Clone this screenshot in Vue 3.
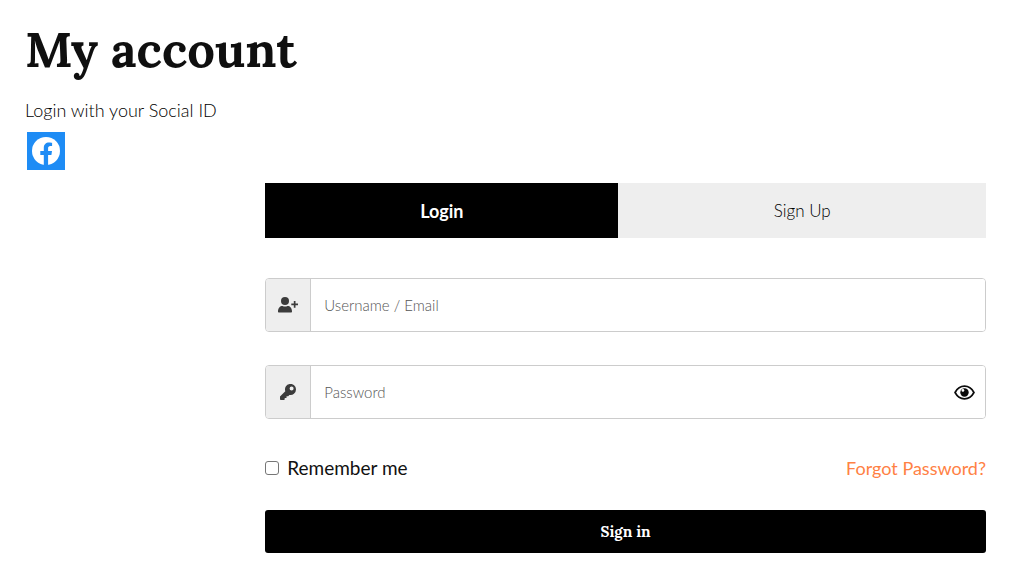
<script setup>
import { ref } from 'vue'

const username = ref('')
const password = ref('')
const remember = ref(false)
const showPassword = ref(false)
</script>

<template>
  <main class="account">
    <h1 class="title">My account</h1>
    <p class="social-text">Login with your Social ID</p>
    <a class="facebook" href="#facebook" aria-label="Login with Facebook">
      <svg viewBox="0 0 28 28" aria-hidden="true">
        <circle cx="14" cy="14" r="14" fill="#fff" />
        <path
          fill="#1e8cf5"
          d="M11.8 28V18H8.3v-4h3.5v-3.1c0-3.6 2.1-5.5 5.3-5.5 1.5 0 3 .3 3 .3v3.4h-1.7c-1.7 0-2.3 1-2.3 2.1V14h3.9l-.6 4h-3.3v10z"
        />
      </svg>
    </a>

    <section class="panel">
      <div class="tabs">
        <button type="button" class="tab tab-active">Login</button>
        <button type="button" class="tab">Sign Up</button>
      </div>

      <form class="form" @submit.prevent>
        <div class="field">
          <label class="addon" for="username" aria-label="Username or email">
            <svg class="user-icon" viewBox="0 0 20 16" aria-hidden="true">
              <circle cx="7" cy="4" r="4" />
              <path d="M0 14.500C0 11 2 9 4.500 9c.8.4 1.600.6 2.500.6S8.700 9.400 9.500 9c2.500 0 4.500 2 4.500 5.500 0 .8-.4 1-1 1H1c-.6 0-1-.2-1-1z" />
              <path d="M15.800 4h1.700v2.500H20v1.700h-2.500v2.500h-1.700V8.200h-2.500V6.500h2.500z" />
            </svg>
          </label>
          <input id="username" v-model="username" class="input" type="text" placeholder="Username / Email" />
        </div>

        <div class="field">
          <label class="addon" for="password" aria-label="Password">
            <svg class="key-icon" viewBox="0 0 16 16" aria-hidden="true">
              <path
                fill-rule="evenodd"
                d="M16 5.500a5.500 5.500 0 0 1-6.600 5.400L8.200 12.200H6.500V14H4.700v1.300c0 .4-.3.7-.7.7H.8c-.4 0-.8-.3-.8-.8v-2.700l5.300-5.300A5.500 5.500 0 1 1 16 5.500zM11.600 2.500a2 2 0 1 0 0 4 2 2 0 0 0 0-4z"
              />
            </svg>
          </label>
          <input
            id="password"
            v-model="password"
            class="input"
            :type="showPassword ? 'text' : 'password'"
            placeholder="Password"
          />
          <button type="button" class="eye" aria-label="Show password" @click="showPassword = !showPassword">
            <svg viewBox="0 0 20 14" aria-hidden="true">
              <path d="M1 7C3 3.300 6.200 1 10 1s7 2.300 9 6c-2 3.700-5.200 6-9 6S3 10.700 1 7z" fill="#fff" stroke="#0b0b0b" stroke-width="1.600" />
              <circle cx="10" cy="7" r="4" fill="#0b0b0b" />
              <circle cx="8.500" cy="5" r="1.300" fill="#fff" />
            </svg>
          </button>
        </div>

        <div class="options">
          <label class="remember" for="remember">
            <input id="remember" v-model="remember" class="checkbox" type="checkbox" />
            Remember me
          </label>
          <a class="forgot" href="#forgot">Forgot Password?</a>
        </div>

        <button type="submit" class="submit">Sign in</button>
      </form>
    </section>
  </main>
</template>

<style>
body {
  margin: 0;
  background: #fff;
}
</style>

<style scoped>
.account {
  box-sizing: border-box;
  padding: 15px 38px 32px 25px;
  color: #111;
  font-family: Lato, "Liberation Sans", sans-serif;
  font-weight: 300;
}

.title {
  margin: 0;
  color: #0f0f0f;
  font-family: Lora, "Liberation Serif", serif;
  font-size: 49px;
  font-weight: 700;
  line-height: 68px;
}

.social-text {
  margin: 14px 0 9px;
  color: #000;
  font-size: 18px;
  line-height: 26px;
}

.facebook {
  display: flex;
  align-items: center;
  justify-content: center;
  width: 38px;
  height: 38px;
  margin-left: 2px;
  background: #1e8cf5;
}

.facebook svg {
  width: 28px;
  height: 28px;
}

.panel {
  width: 75%;
  margin: 13px 0 0 auto;
}

.tabs {
  display: grid;
  grid-template-columns: 49fr 51fr;
}

.tab {
  height: 55px;
  padding: 0;
  border: 0;
  background: #eee;
  color: #000;
  font-family: inherit;
  font-size: 17px;
  font-weight: 300;
}

.tab-active {
  background: #000;
  color: #fff;
  font-size: 18px;
  font-weight: 700;
}

.field {
  display: flex;
  box-sizing: border-box;
  height: 54px;
  margin-top: 33px;
  overflow: hidden;
  border: 1px solid #ccc;
  border-radius: 4px;
}

.field:first-child {
  margin-top: 40px;
}

.addon {
  display: flex;
  flex: none;
  align-items: center;
  justify-content: center;
  width: 44px;
  border-right: 1px solid #ccc;
  background: #eee;
  fill: #3c3c3c;
}

.user-icon {
  width: 20px;
  height: 16px;
}

.key-icon {
  width: 16px;
  height: 16px;
}

.input {
  flex: 1;
  min-width: 0;
  padding: 0 13px;
  border: 0;
  outline: 0;
  background: #fff;
  color: #222;
  font-family: inherit;
  font-size: 15px;
  font-weight: 300;
}

.input::placeholder {
  color: #555;
  opacity: 1;
}

.eye {
  display: flex;
  flex: none;
  align-items: center;
  padding: 0 10px;
  border: 0;
  background: #fff;
}

.eye svg {
  width: 21px;
  height: 15px;
}

.options {
  display: flex;
  align-items: center;
  justify-content: space-between;
  margin-top: 36px;
  font-size: 18px;
  line-height: 26px;
}

.remember {
  display: flex;
  align-items: center;
  gap: 8px;
  font-size: 19px;
  font-weight: 400;
}

.checkbox {
  appearance: none;
  box-sizing: border-box;
  width: 14px;
  height: 14px;
  margin: 0;
  border: 1px solid #767676;
  border-radius: 3px;
  background: #fff;
}

.checkbox:checked {
  background: #000;
}

.forgot {
  color: #ff8144;
  font-weight: 400;
  text-decoration: none;
}

.submit {
  width: 100%;
  height: 43px;
  margin-top: 29px;
  border: 0;
  border-radius: 3px;
  background: #000;
  color: #fff;
  font-family: Lora, "Liberation Serif", serif;
  font-size: 15px;
  font-weight: 700;
}
</style>
